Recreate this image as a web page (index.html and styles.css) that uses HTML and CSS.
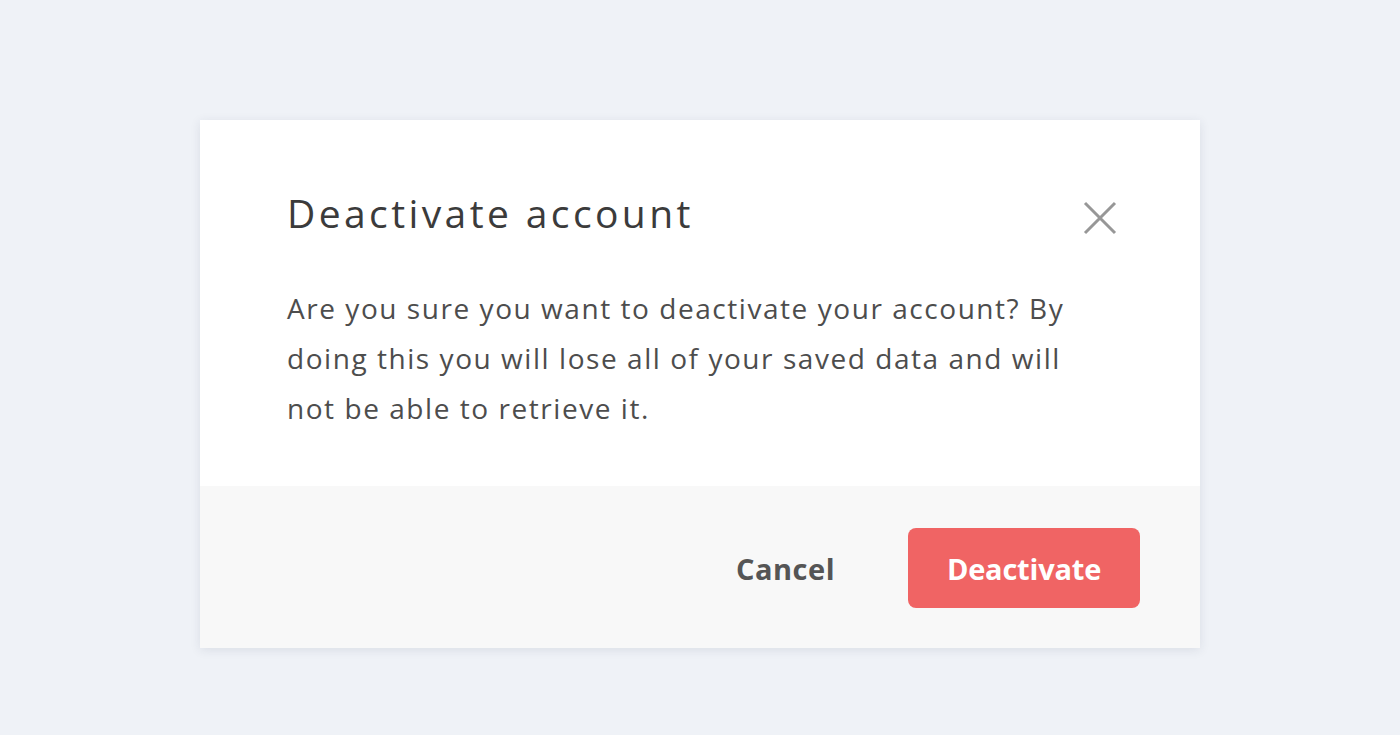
FILE: index.html
```html
<!DOCTYPE html>
<html lang="en">
<head>
<meta charset="utf-8">
<title>Deactivate account</title>
<link rel="stylesheet" href="styles.css">
</head>
<body>
<div class="page">
  <div class="modal" role="dialog" aria-labelledby="modal-title">
    <div class="modal-main">
      <div class="modal-header">
        <h2 class="modal-title" id="modal-title">Deactivate account</h2>
        <button class="close-btn" aria-label="Close">
          <svg width="34" height="34" viewBox="0 0 34 34" aria-hidden="true">
            <path d="M2 2 L32 32 M32 2 L2 32" stroke="#979797" stroke-width="3" fill="none"/>
          </svg>
        </button>
      </div>
      <p class="modal-text">Are you sure you want to deactivate your account? By doing this you will lose all of your saved data and will not be able to retrieve it.</p>
    </div>
    <div class="modal-footer">
      <button class="btn btn-cancel">Cancel</button>
      <button class="btn btn-danger">Deactivate</button>
    </div>
  </div>
</div>
</body>
</html>
```
FILE: styles.css
```css
html, body {
  margin: 0;
  padding: 0;
}
body {
  background: #eff2f7;
  font-family: "Open Sans", "Liberation Sans", sans-serif;
}
.page {
  width: 1400px;
  height: 735px;
  padding-top: 120px;
  box-sizing: border-box;
  display: flex;
  justify-content: center;
  align-items: flex-start;
}
.modal {
  width: 1000px;
  background: #ffffff;
  box-shadow: 0 2px 10px rgba(40, 50, 80, 0.10);
}
.modal-main {
  padding: 68px 83px 0 87px;
  height: 366px;
  box-sizing: border-box;
}
.modal-header {
  display: flex;
  justify-content: space-between;
  align-items: flex-start;
  height: 50px;
}
.modal-title {
  margin: 0;
  font-family: "Open Sans", sans-serif;
  font-weight: 400;
  font-size: 39px;
  line-height: 50px;
  color: #3b3b3b;
  letter-spacing: 3.4px;
}
.close-btn {
  border: 0;
  background: none;
  padding: 0;
  margin-top: 13px;
  width: 34px;
  height: 34px;
  cursor: pointer;
  display: block;
}
.close-btn svg {
  display: block;
}
.modal-text {
  margin: 45px 0 0;
  max-width: 805px;
  font-family: "Open Sans", sans-serif;
  font-weight: 400;
  font-size: 28px;
  line-height: 50px;
  letter-spacing: 1.55px;
  color: #4d4d4d;
}
.modal-footer {
  background: #f8f8f8;
  height: 162px;
  box-sizing: border-box;
  padding: 42px 60px 40px;
  display: flex;
  justify-content: flex-end;
  align-items: flex-start;
  gap: 32px;
}
.btn {
  height: 80px;
  border: 0;
  border-radius: 8px;
  font-family: "Open Sans", sans-serif;
  font-weight: 700;
  font-size: 29px;
  cursor: pointer;
}
.btn-cancel {
  background: none;
  color: #555555;
  padding: 0 41px;
  letter-spacing: 0.5px;
}
.btn-danger {
  width: 232px;
  background: #f06464;
  color: #ffffff;
  letter-spacing: -0.2px;
}
```
